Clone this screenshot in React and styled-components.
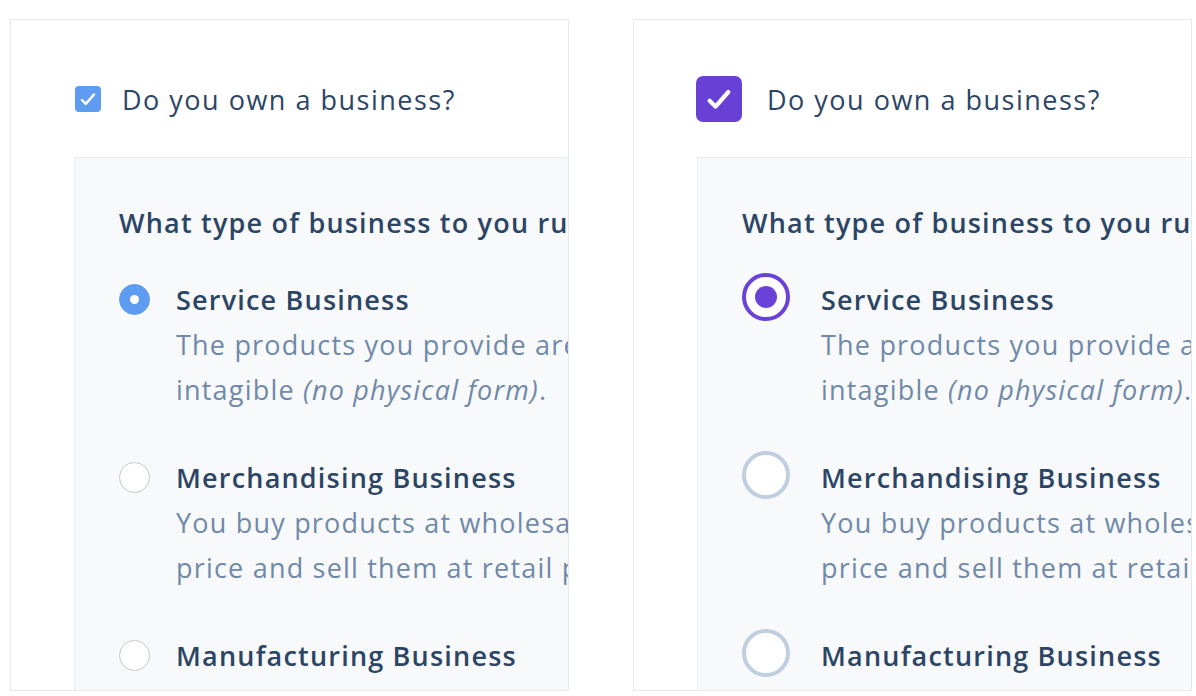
import React from "react";
import styled, { createGlobalStyle, css } from "styled-components";

const GlobalStyle = createGlobalStyle`
  body {
    margin: 0;
    background: #ffffff;
    font-family: "Open Sans", "Noto Sans", sans-serif;
  }
`;

const Page = styled.div`
  display: flex;
  gap: 64px;
  padding: 19px 0 0 10px;
  height: 696px;
  box-sizing: border-box;
  overflow: hidden;
`;

const Panel = styled.div`
  width: 559px;
  height: 672px;
  flex-shrink: 0;
  border: 1px solid #e6e8eb;
  box-sizing: border-box;
  overflow: hidden;
  padding-left: ${(p) => (p.$modern ? 62 : 63)}px;
  padding-top: ${(p) => (p.$modern ? 56 : 66)}px;
`;

const CheckRow = styled.div`
  display: flex;
  align-items: center;
  gap: ${(p) => (p.$modern ? 25 : 21)}px;
  height: ${(p) => (p.$modern ? 46 : 26)}px;
`;

const CheckBox = styled.div`
  flex-shrink: 0;
  display: flex;
  align-items: center;
  justify-content: center;
  ${(p) =>
    p.$modern
      ? css`
          width: 46px;
          height: 46px;
          border-radius: 7px;
          background: #6940d6;
        `
      : css`
          width: 26px;
          height: 26px;
          margin-left: 1px;
          border-radius: 4px;
          background: #5d9cf1;
        `}
`;

const Label = styled.div`
  font-size: 27px;
  letter-spacing: 1.5px;
  color: #2c4565;
  font-weight: 400;
  white-space: nowrap;
`;

const SubBox = styled.div`
  width: 700px;
  margin-top: ${(p) => (p.$modern ? 35 : 45)}px;
  margin-left: ${(p) => (p.$modern ? 1 : 0)}px;
  background: #f7f9fb;
  border: 1px solid #e9eef4;
  padding: 42px 0 0 44px;
  box-sizing: border-box;
  height: 700px;
`;

const Question = styled.div`
  font-size: 27px;
  letter-spacing: 1.2px;
  line-height: 45px;
  font-weight: 600;
  color: #2c4565;
  white-space: nowrap;
`;

const Options = styled.div`
  display: flex;
  flex-direction: column;
  gap: 43px;
  margin-top: 32px;
`;

const Option = styled.div`
  display: flex;
  align-items: flex-start;
  gap: ${(p) => (p.$modern ? 31 : 26)}px;
`;

const Radio = styled.div`
  flex-shrink: 0;
  border-radius: 50%;
  box-sizing: border-box;
  display: flex;
  align-items: center;
  justify-content: center;
  ${(p) =>
    p.$modern
      ? css`
          width: 48px;
          height: 48px;
          margin-top: -4px;
          background: #ffffff;
          border: 4px solid ${p.$checked ? "#6a42d8" : "#bfcfe0"};
        `
      : css`
          width: 31px;
          height: 31px;
          margin-top: 7px;
          background: ${p.$checked ? "#5e9cf1" : "#ffffff"};
          border: 1px solid ${p.$checked ? "#5e9cf1" : "#c9c9c9"};
        `}
`;

const Dot = styled.div`
  border-radius: 50%;
  ${(p) =>
    p.$modern
      ? css`
          width: 22px;
          height: 22px;
          background: #6a42d8;
        `
      : css`
          width: 9px;
          height: 9px;
          background: #ffffff;
        `}
`;

const OptionText = styled.div`
  font-size: 27px;
  letter-spacing: 1.2px;
  line-height: 45px;
  white-space: nowrap;
`;

const OptionTitle = styled.div`
  font-weight: 600;
  color: #2c4565;
`;

const OptionDesc = styled.div`
  color: #7089a8;
  font-weight: 400;
`;

const Check = ({ modern }) => (
  <svg
    width={modern ? 28 : 18}
    height={modern ? 28 : 18}
    viewBox="0 0 24 24"
    fill="none"
    stroke="#ffffff"
    strokeWidth={modern ? 3.6 : 3.4}
    strokeLinecap="round"
    strokeLinejoin="round"
  >
    <path d="M4 13.5l5 5L20 6" />
  </svg>
);

const options = [
  {
    title: "Service Business",
    lines: [
      "The products you provide are",
      <>
        intagible <i>(no physical form)</i>.
      </>,
    ],
    checked: true,
  },
  {
    title: "Merchandising Business",
    lines: ["You buy products at wholesale", "price and sell them at retail price."],
  },
  {
    title: "Manufacturing Business",
    lines: ["You make products with the raw", "materials you buy and sell them."],
  },
];

const BusinessForm = ({ modern }) => (
  <Panel $modern={modern}>
    <CheckRow $modern={modern}>
      <CheckBox $modern={modern}>
        <Check modern={modern} />
      </CheckBox>
      <Label>Do you own a business?</Label>
    </CheckRow>
    <SubBox $modern={modern}>
      <Question>What type of business to you run?</Question>
      <Options>
        {options.map((o) => (
          <Option key={o.title} $modern={modern}>
            <Radio $modern={modern} $checked={o.checked}>
              {o.checked && <Dot $modern={modern} />}
            </Radio>
            <OptionText>
              <OptionTitle>{o.title}</OptionTitle>
              {o.lines.map((l, i) => (
                <OptionDesc key={i}>{l}</OptionDesc>
              ))}
            </OptionText>
          </Option>
        ))}
      </Options>
    </SubBox>
  </Panel>
);

export default function App() {
  return (
    <>
      <GlobalStyle />
      <Page>
        <BusinessForm />
        <BusinessForm modern />
      </Page>
    </>
  );
}
